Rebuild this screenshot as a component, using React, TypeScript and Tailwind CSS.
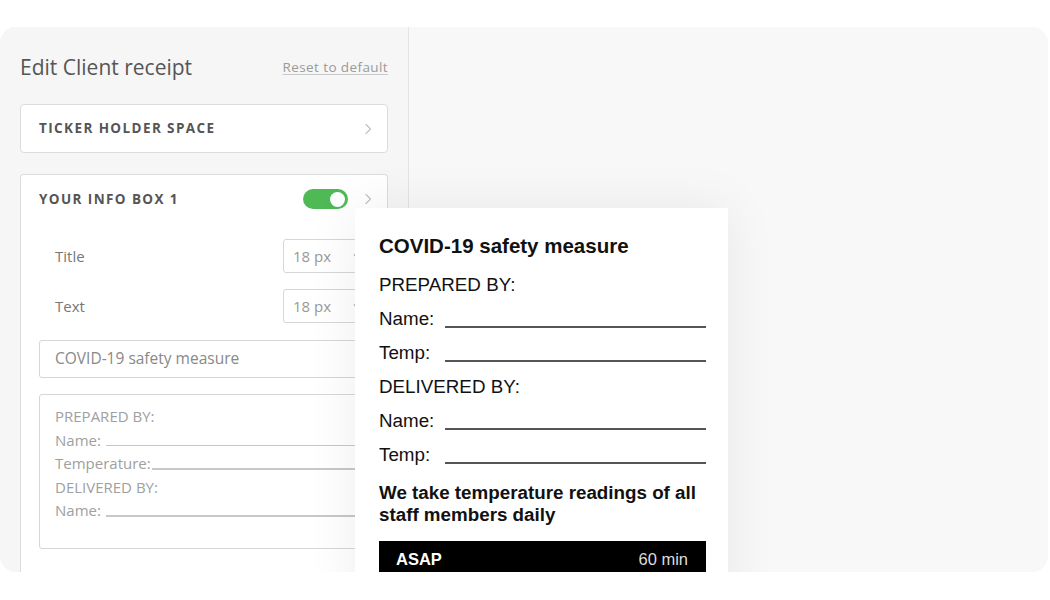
import React from "react";

const Chevron = ({ className = "" }: { className?: string }) => (
  <svg width="8" height="12" viewBox="0 0 8 12" className={className} fill="none">
    <path d="M2 1.5 L6.5 6 L2 10.5" stroke="#c4c4c4" strokeWidth="1.3" strokeLinecap="round" strokeLinejoin="round" />
  </svg>
);

const Caret = () => (
  <svg width="7" height="5" viewBox="0 0 7 5">
    <path d="M0.5 0.5 L6.5 0.5 L3.5 4.5 Z" fill="#999" />
  </svg>
);

const ReceiptRow = ({ label }: { label: string }) => (
  <div className="flex h-[34px] items-center">
    <span className="w-[66px]">{label}</span>
    <div className="ml-auto mt-[16px] h-[2px] w-[261px] bg-[#555]" />
  </div>
);

export default function App() {
  return (
    <div className="h-[600px] w-[1050px] bg-white pt-[27px]">
      <div className="relative flex h-[545px] w-[1048px] overflow-hidden rounded-[16px] bg-[#f8f8f8]">
        {/* Left panel */}
        <div
          className="flex w-[409px] shrink-0 flex-col border-r border-[#e4e4e4] bg-[#f6f6f6] pl-5 pr-5 pt-[28px]"
          style={{ fontFamily: '"Open Sans", sans-serif' }}
        >
          <div className="flex h-[24px] items-center justify-between">
            <span className="text-[21px] leading-[24px] text-[#555]">Edit Client receipt</span>
            <span className="text-[13.5px] tracking-[0.4px] text-[#9a9a9a] underline decoration-[#c8c8c8] underline-offset-2">
              Reset to default
            </span>
          </div>

          <div className="mt-[25px] flex h-[49px] items-center justify-between rounded-[4px] border border-[#dcdcdc] bg-white pl-[18px] pr-[15px]">
            <span className="text-[13.5px] font-bold tracking-[1.4px] text-[#555]">TICKER HOLDER SPACE</span>
            <Chevron />
          </div>

          <div className="mt-[21px] flex-1 rounded-t-[4px] border border-b-0 border-[#dcdcdc] bg-white pl-[18px] pr-[15px]">
            <div className="flex h-[48px] items-center justify-between">
              <span className="text-[13.5px] font-bold tracking-[1.4px] text-[#555]">YOUR INFO BOX 1</span>
              <div className="flex items-center gap-[16px]">
                <div className="flex h-[20px] w-[45px] items-center justify-end rounded-full bg-[#4fba55] pr-[3px]">
                  <div className="h-[15px] w-[15px] rounded-full bg-white" />
                </div>
                <Chevron />
              </div>
            </div>

            <div className="mt-[16px] flex h-[34px] items-center">
              <span className="w-[244px] pl-4 text-[15px] text-[#777]">Title</span>
              <div className="flex h-[34px] w-[86px] items-center justify-between rounded-[3px] border border-[#d6d6d6] bg-white pl-[9px] pr-[8px]">
                <span className="text-[15px] text-[#999]">18 px</span>
                <Caret />
              </div>
            </div>
            <div className="mt-[16px] flex h-[34px] items-center">
              <span className="w-[244px] pl-4 text-[15px] text-[#777]">Text</span>
              <div className="flex h-[34px] w-[86px] items-center justify-between rounded-[3px] border border-[#d6d6d6] bg-white pl-[9px] pr-[8px]">
                <span className="text-[15px] text-[#999]">18 px</span>
                <Caret />
              </div>
            </div>

            <div className="mr-[3px] mt-[17px] flex h-[38px] items-center rounded-[3px] border border-[#d6d6d6] bg-white pl-[15px]">
              <span className="text-[15.5px] text-[#888]">COVID-19 safety measure</span>
            </div>

            <div className="mr-[3px] mt-[16px] flex h-[155px] flex-col rounded-[3px] border border-[#d6d6d6] bg-white pl-[15px] pt-[10px] text-[15px] leading-[23.5px] text-[#a0a0a0]">
              <span>PREPARED BY:</span>
              <div className="flex items-center">
                <span>Name:</span>
                <div className="ml-[5px] mt-[10px] h-[1.5px] flex-1 bg-[#c8c8c8]" />
              </div>
              <div className="flex items-center">
                <span>Temperature:</span>
                <div className="ml-[1px] mt-[10px] h-[1.5px] flex-1 bg-[#c8c8c8]" />
              </div>
              <span>DELIVERED BY:</span>
              <div className="flex items-center">
                <span>Name:</span>
                <div className="ml-[5px] mt-[10px] h-[1.5px] flex-1 bg-[#c8c8c8]" />
              </div>
            </div>
          </div>
        </div>

        {/* Right area */}
        <div className="flex-1 bg-[#f8f8f8]" />

        {/* Receipt preview */}
        <div
          className="absolute left-[355px] top-[181px] h-[400px] w-[373px] bg-white pl-6 pr-[22px] pt-[21px] text-[#111] shadow-[0_0_50px_rgba(0,0,0,0.07)]"
          style={{ fontFamily: '"Liberation Sans", Arial, sans-serif' }}
        >
          <div className="text-[20.5px] font-bold leading-[34px]">COVID-19 safety measure</div>
          <div className="mt-[5px] text-[18.8px]">
            <div className="flex h-[34px] items-center">PREPARED BY:</div>
            <ReceiptRow label="Name:" />
            <ReceiptRow label="Temp:" />
            <div className="flex h-[34px] items-center">DELIVERED BY:</div>
            <ReceiptRow label="Name:" />
            <ReceiptRow label="Temp:" />
          </div>
          <div className="mt-[10px] w-[327px] text-[18.8px] font-bold leading-[22px]">
            We take temperature readings of all staff members daily
          </div>
          <div className="mt-[15px] flex h-[36px] w-[327px] items-center justify-between bg-black pl-[17px] pr-[18px] text-[16.5px] text-white">
            <span className="font-bold">ASAP</span>
            <span className="text-[#ddd]">60 min</span>
          </div>
        </div>
      </div>
    </div>
  );
}
